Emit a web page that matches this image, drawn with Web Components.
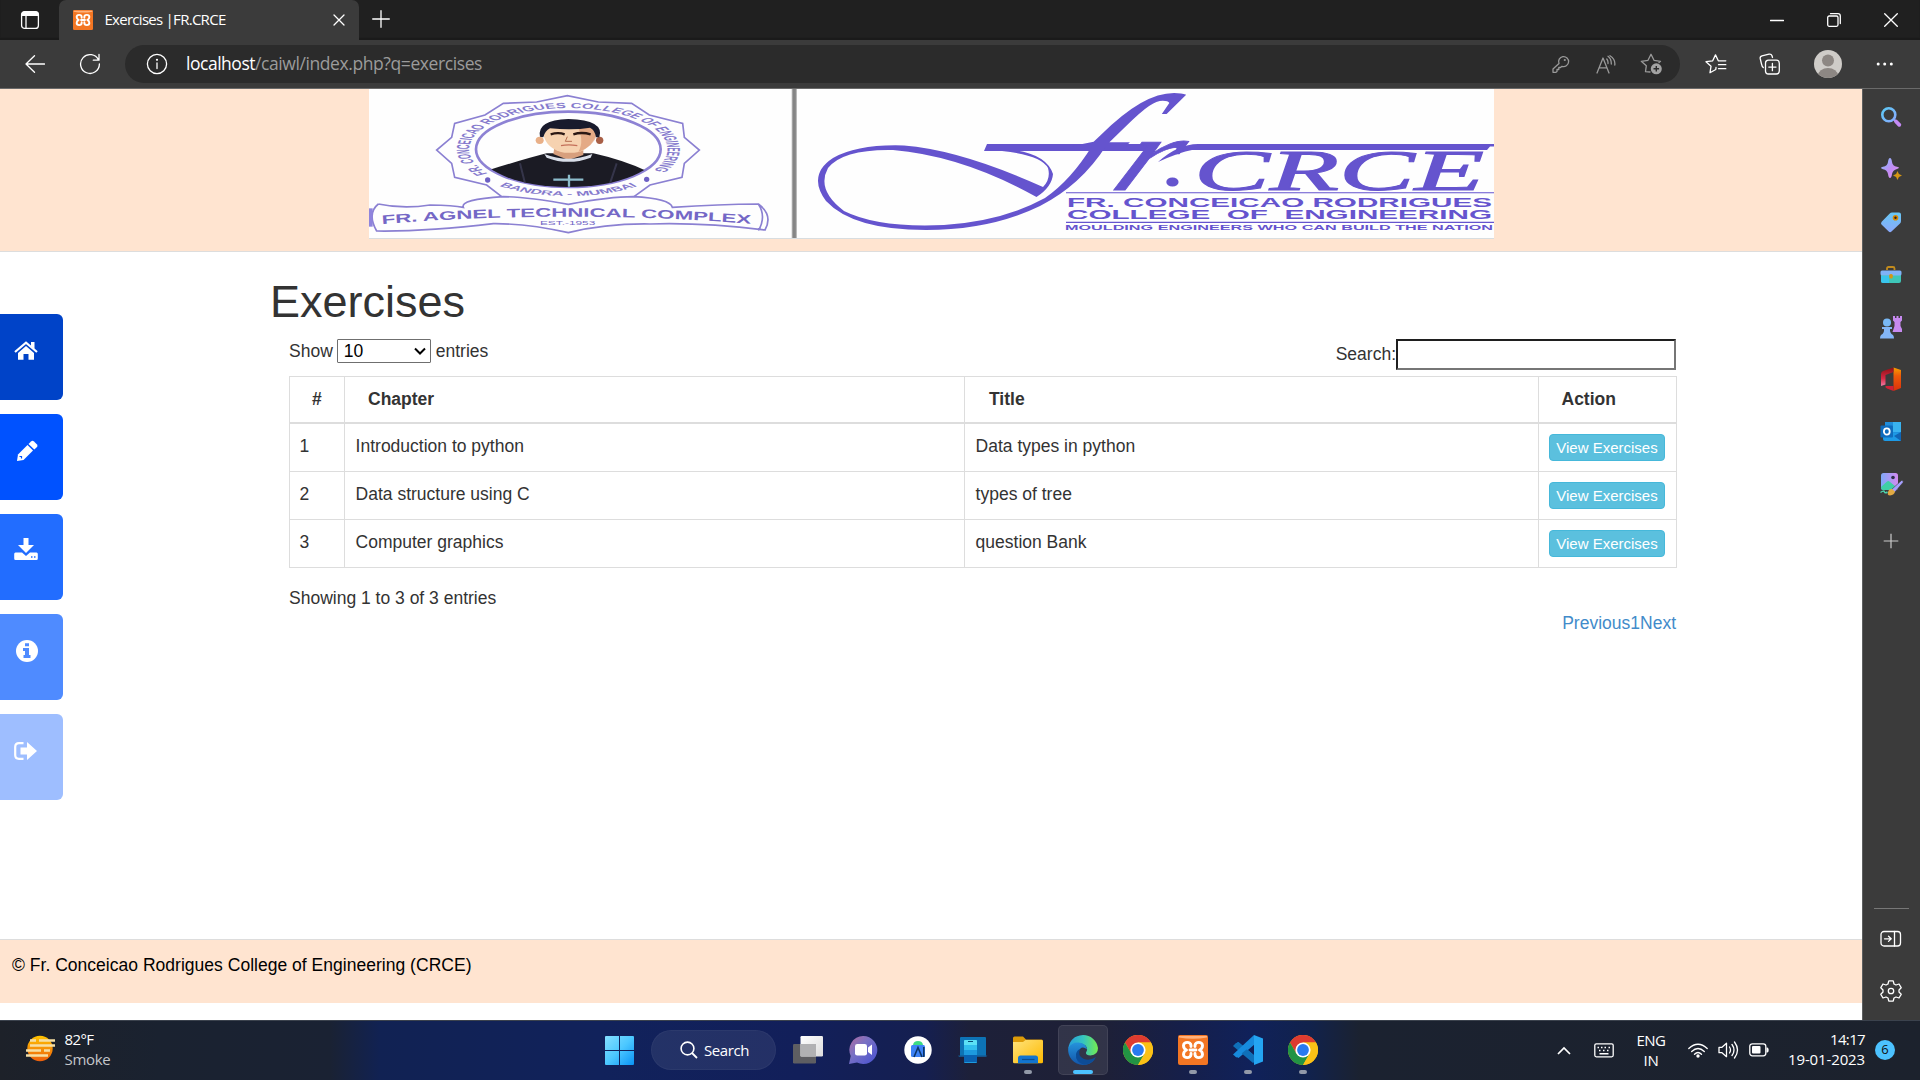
<!DOCTYPE html>
<html lang="en">
<head>
<meta charset="utf-8">
<title>Exercises |FR.CRCE</title>
<style>
html,body{margin:0;height:1080px;overflow:hidden;background:#fff}
body{font-family:"Liberation Sans",Arial,sans-serif}
</style>
</head>
<body>
<desktop-screen></desktop-screen>
<script>
const def=(name,html,after)=>customElements.define(name,class extends HTMLElement{
  constructor(){super();this.attachShadow({mode:'open'})}
  connectedCallback(){
    const t=document.createElement('template');
    t.innerHTML=typeof html==='function'?html(this):html;
    this.shadowRoot.replaceChildren(t.content.cloneNode(true));
    if(after)after(this);
  }
});

const chrome=`<g transform="translate(15 15)"><circle r="15" fill="#fbc116"/><path d="M-13 -7.5A15 15 0 0 1 13 -7.5L0 -7.5L-6.5 3.75Z" fill="#de3b30"/><path d="M-13 -7.5A15 15 0 0 0 0 15L6.5 3.75L-6.5 3.75Z" fill="#229344"/><path d="M0 -7.5H13A15 15 0 0 1 0 15L6.5 3.75Z" fill="#fbc116"/><circle r="7.6" fill="#fff"/><circle r="5.9" fill="#2a7af0"/></g>`;
const xampp=`<rect width="30" height="30" rx="2" fill="#f37623"/><path d="M1 1H29V2.5Q15 5 1 2.5Z" fill="#ffb27c"/><path d="M13 11.500V10.500C13 6.300 5.500 6.300 5.500 10.500C5.500 12.500 6.500 14.200 8.500 15C6.500 15.800 5.500 17.500 5.500 19.500C5.500 23.700 13 23.700 13 19.500V18.500M17 11.500V10.500C17 6.300 24.500 6.300 24.500 10.500C24.500 12.500 23.500 14.200 21.500 15C23.500 15.800 24.500 17.500 24.500 19.500C24.500 23.700 17 23.700 17 19.500V18.500M12 15H18" fill="none" stroke="#fff" stroke-width="2.900" stroke-linejoin="round" stroke-linecap="round"/>`;
const W='fill="none" stroke="#fff" stroke-width="1.3" stroke-linecap="round" stroke-linejoin="round"';
const G='fill="none" stroke="#9a9a9a" stroke-width="1.3" stroke-linecap="round" stroke-linejoin="round"';
const ICONS={
 workspace:[20,20,`<rect x="1.600" y="1.600" width="16.800" height="16.800" rx="3" ${W}/><path d="M1.500 6V4Q1.500 1.500 4 1.500H16Q18.500 1.500 18.500 4V6Z" fill="#fff"/><path d="M6 5V18" ${W}/>`],
 favicon:[30,30,xampp],
 xampp:[30,30,xampp],
 chrome:[30,30,chrome],
 x:[12,12,`<path d="M1 1L11 11M11 1L1 11" ${W}/>`],
 xbig:[14,14,`<path d="M.7 .7L13.300 13.300M13.300 .7L.7 13.300" ${W}/>`],
 plus:[18,18,`<path d="M9 .7V17.300M.7 9H17.300" ${W}/>`],
 plus2:[16,16,`<path d="M8 .7V15.300M.7 8H15.300" fill="none" stroke="#ccc" stroke-width="1.200"/>`],
 min:[14,14,`<path d="M.5 7.500H13.500" ${W}/>`],
 max:[14,14,`<rect x=".7" y="3" width="10.300" height="10.300" rx="1.500" ${W}/><path d="M3.500 .7H11Q13.300 .7 13.300 3V10.500" ${W}/>`],
 back:[20,18,`<path d="M19.500 9H1M9.500 .7L1 9L9.500 17.300" ${W}/>`],
 reload:[22,22,`<path d="M19.500 7A9.400 9.400 0 1 0 20.400 11M20 1.500V7.200H14.300" ${W}/>`],
 info:[22,22,`<circle cx="11" cy="11" r="9.600" ${W}/><path d="M11 10V15.500" ${W} /><circle cx="11" cy="6.800" r="1.100" fill="#fff"/>`],
 key:[18,18,`<path d="M7 8.500A5 5 0 1 1 10 11.300L8.500 12.500H6.800V14.500H5V16.500L4 17.300H1V14Z" ${G}/><circle cx="12.800" cy="5" r="1.100" fill="#9a9a9a"/>`],
 read:[20,19,`<path d="M1 18L7 3L13 18M3 12.800H11M12 1.300Q15.500 4 15.300 9M14 .7Q19.500 4 18.800 10M10.800 4Q12.300 6 12 8.500" ${G}/>`],
 star:[23,22,`<path d="M10 19L5.500 18.700L6.300 12.800L1.300 8.300L8 7.300L11 1.300L14 7.300L20.500 8.300L19 9.500" ${G}/><circle cx="16.300" cy="15.800" r="5.500" fill="#a3a3a3"/><path d="M16.300 13V18.600M13.500 15.800H19.100" stroke="#2b2b2b" stroke-width="1.400"/>`],
 favs:[22,20,`<path d="M11 13.500L10.800 15.500L5 18.700L6 12.300L1 7.700L7.700 6.800L10.500 .9L13.300 6.800H20.800M13.500 10.700H20.800M13.500 14.700H20.800" ${W}/>`],
 coll:[22,22,`<rect x="6.500" y="7.200" width="13.800" height="13.800" rx="3" ${W}/><path d="M13.400 10.500V17.700M9.800 14.100H17M4.300 14.500Q3 13.500 2.500 11L1.200 5.500Q.8 3.500 3 2.800L10 1.200Q12.300 .8 13 2.800L13.500 4.500" ${W}/>`],
 avatar:[28,28,`<defs><clipPath id="a"><circle cx="14" cy="14" r="14"/></clipPath></defs><g clip-path="url(#a)"><rect width="28" height="28" fill="#cfccc8"/><circle cx="14" cy="10.500" r="6" fill="#8d8783"/><ellipse cx="14" cy="25.500" rx="10" ry="7.500" fill="#8d8783"/></g>`],
 dots:[18,4,`<circle cx="2.200" cy="2" r="1.500" fill="#fff"/><circle cx="8.700" cy="2" r="1.500" fill="#fff"/><circle cx="15.300" cy="2" r="1.500" fill="#fff"/>`],
 ssearch:[22,22,`<defs><linearGradient id="g" x2="1" y2="1"><stop stop-color="#5bc9f5"/><stop offset="1" stop-color="#8aaaff"/></linearGradient></defs><circle cx="8.800" cy="8.800" r="6.500" fill="none" stroke="url(#g)" stroke-width="2.600"/><path d="M14 13.500L16 15.500" stroke="#8aaaff" stroke-width="2"/><path d="M16 15.500L19.300 18.800" stroke="#c58af5" stroke-width="3.800" stroke-linecap="round"/>`],
 spark:[22,22,`<defs><linearGradient id="g" x2="1" y2="1"><stop stop-color="#7ec6ff"/><stop offset=".55" stop-color="#c28bf3"/><stop offset="1" stop-color="#e59af0"/></linearGradient></defs><path d="M10 0Q11.500 0 12 4Q12.500 8 17 8.800Q21 9.500 17 11Q12.800 12 12 16Q11.500 20 10 20Q8.500 20 8 16Q7.200 12 3 11.200Q-1 10 3 8.800Q7.500 8 8 4Q8.500 0 10 0Z" fill="url(#g)"/><path d="M17.500 13L18.900 16.100L22 17.500L18.900 18.900L17.500 22L16.100 18.900L13 17.500L16.100 16.100Z" fill="#d59613"/>`],
 tag:[22,22,`<defs><linearGradient id="g" x2="0" y2="1"><stop stop-color="#67c7f3"/><stop offset="1" stop-color="#8ba9fb"/></linearGradient></defs><path d="M12 1.500H19Q21 1.500 21 3.500V10Q21 11.500 20 12.500L11.500 20.500Q10 21.800 8.700 20.500L1.500 13.500Q.4 12.200 1.700 10.800L9.500 2.700Q10.700 1.500 12 1.500Z" fill="url(#g)"/><circle cx="15.500" cy="6.700" r="2.800" fill="#d88a00"/><circle cx="15.500" cy="6.700" r="1.200" fill="#2a2222"/>`],
 box:[22,22,`<path d="M7 6V4.500Q7 3 8.500 3H13Q14.500 3 14.500 4.500V6" fill="none" stroke="#c28b1d" stroke-width="1.800"/><path d="M1 9H21V17Q21 19 19 19H3Q1 19 1 17Z" fill="#3ec6b8"/><path d="M1 12H9V19H3Q1 19 1 17Z" fill="#39c5ec"/><rect x=".5" y="6.500" width="21" height="5" rx="1.500" fill="#7fb2f7"/><rect x="9.200" y="10" width="3.600" height="4.500" rx="1.500" fill="#d59613"/>`],
 chess:[24,24,`<path d="M14 1H16V3H17.500V1H19.500V3H21V1H23V5.500L21.500 7V11L23 14V17H13.500L15.500 11V7L14 5.500Z" fill="#c78af0"/><circle cx="8" cy="7.500" r="4" fill="#79b9f7"/><path d="M3 12H13V14H11Q10.500 18 14 20Q15 21 15 23.500H1Q1 21 2 20Q5.500 18 5 14H3Z" fill="#83b6f8"/>`],
 office:[22,25,`<defs><linearGradient id="g" x2="0" y2="1"><stop stop-color="#f5a100"/><stop offset=".35" stop-color="#ee5b09"/><stop offset="1" stop-color="#d9300b"/></linearGradient><linearGradient id="h" x2="0" y2="1"><stop stop-color="#8f1014"/><stop offset=".6" stop-color="#d72a45"/><stop offset="1" stop-color="#f07ba5"/></linearGradient></defs><path d="M13.500 .5L21 3V21L13.500 24Z" fill="url(#g)"/><path d="M13.500 .5V5L5.500 8V17.500L1 19V7Q1 5 3 4Z" fill="url(#h)"/><path d="M5.500 19H13.500V24L7 21.500Q5 20.500 5.500 19Z" fill="#cf2136"/>`],
 outlook:[22,22,`<rect x="5" y="1" width="16" height="15" fill="#1f8ddb"/><path d="M13 1H21V11H13Z" fill="#39b3f0"/><path d="M3 11L21 12V20H5Q3 20 3 18Z" fill="#1d9ae6"/><path d="M14 15L21 11V20Z" fill="#1065b5"/><rect x=".5" y="4.500" width="12.500" height="12" rx="1" fill="#0f6cbd"/><ellipse cx="6.800" cy="10.500" rx="2.900" ry="3.200" fill="none" stroke="#fff" stroke-width="1.800"/>`],
 photo:[25,25,`<defs><linearGradient id="g" x2="1" y2="0"><stop stop-color="#7ea8f8"/><stop offset="1" stop-color="#d48af0"/></linearGradient></defs><rect x="2" y="1" width="17" height="17" rx="2.500" fill="url(#g)"/><path d="M2 15L8 9.500Q9.500 8.500 11 10L16 14V18H4Q2 18 2 15Z" fill="#3fcfa5"/><circle cx="14" cy="5.500" r="1.800" fill="#2e2f4a"/><path d="M12 18L22.500 8.500Q25 8 24 10.500L15.500 20.500Z" fill="#a7a0ff" stroke="#3b3b3b" stroke-width=".6"/><path d="M9 20Q10 16.500 13 17L16 19.500Q15.500 23 11 23.500Q8 23.500 9 20Z" fill="#e2aa43"/><path d="M1.500 20.500Q5 18 5.500 20Q6 21.500 8.500 20" fill="none" stroke="#4ed5ae" stroke-width="1.500"/>`],
 panel:[22,18,`<rect x="1" y="1.500" width="19.500" height="14.500" rx="3" ${W}/><path d="M14.500 1.500V16M4.500 8.800H11M8.500 6.200L11.200 8.800L8.500 11.400" ${W}/>`],
 gear:[24,24,`<path d="M9.800 1.800H14.200L15 5L17 6L20 5L22.200 8.700L20 11V13L22.200 15.300L20 19L17 18L15 19L14.200 22.200H9.800L9 19L7 18L4 19L1.800 15.300L4 13V11L1.800 8.700L4 5L7 6L9 5Z" ${W}/><circle cx="12" cy="12" r="2.700" ${W}/>`],
 home:[24,20,`<path d="M12 5L20 12V18.800H14.500V13H9.500V18.800H4V12Z" fill="#fff"/><path d="M1 11L12 1.700L23 11" fill="none" stroke="#fff" stroke-width="2.200"/><path d="M17 1H20.500V8L17 5Z" fill="#fff"/>`],
 pencil:[24,24,`<path d="M3 15.500L12.500 6L18 11.500L8.500 21L2 22Z" fill="#fff"/><path d="M13.500 5L16 2.500Q17.500 1 19 2.500L22 5.500Q23 7 22 8L19.300 10.500Z" fill="#fff"/><path d="M4.500 17.500H6.500V19.500" fill="none" stroke="#0052ff" stroke-width="1.200"/>`],
 download:[24,22,`<path d="M9.500 0H14.500V7H20L12 15L4 7H9.500Z" fill="#fff"/><path d="M1.500 14.500H8L12 18L16 14.500H22.500Q23.800 14.500 23.800 16V20.500Q23.800 22 22.500 22H1.500Q.2 22 .2 20.500V16Q.2 14.500 1.500 14.500Z" fill="#fff"/><path d="M17 19H18.500M20 19H21.500" stroke="#226dff" stroke-width="1.300"/>`],
 about:[22,22,`<circle cx="11" cy="11" r="11" fill="#fff"/><path d="M9 3.300H13V6.300H9ZM7 8H13V15H14.500V18H7.500V15H9V11H7Z" fill="#4f8bff"/>`],
 out:[23,18,`<path d="M9.500 1.200H5Q1.200 1.200 1.200 5V13Q1.200 16.800 5 16.800H9.500" fill="none" stroke="#fff" stroke-width="2.200"/><path d="M6.500 5.500H13V0L23 9L13 18V12.500H6.500Z" fill="#fff"/>`],
 weather:[31,27,`<defs><linearGradient id="g" x2="0" y2="1"><stop stop-color="#ffc400"/><stop offset="1" stop-color="#ee5f0c"/></linearGradient></defs><circle cx="15" cy="13.500" r="12.700" fill="url(#g)"/><path d="M5 5.500H11M14 5.500H30M5 10.500H30M1 15.500H16M19 15.500H25M1 20.500H23" stroke="#f6dfa5" stroke-width="2.300"/>`],
 win:[29,29,`<defs><linearGradient id="g" x2="1" y2="1"><stop stop-color="#85dfff"/><stop offset=".5" stop-color="#4cc8ff"/><stop offset="1" stop-color="#0a93f5"/></linearGradient></defs><path d="M0 1Q0 0 1 0H14V14H0ZM15 0H28Q29 0 29 1V14H15ZM0 15H14V29H1Q0 29 0 28ZM15 15H29V28Q29 29 28 29H15Z" fill="url(#g)"/>`],
 search:[18,18,`<circle cx="7.500" cy="7.500" r="6.400" fill="none" stroke="#fff" stroke-width="1.600"/><path d="M12 12L17 17" stroke="#fff" stroke-width="1.800"/>`],
 task:[30,28,`<defs><linearGradient id="g" x2="1" y2="1"><stop stop-color="#fff"/><stop offset="1" stop-color="#dcdcdc"/></linearGradient></defs><rect y="8" width="23" height="19.500" rx="1.200" fill="#5e5e62"/><rect x="7.500" y="0" width="22.500" height="20.500" rx="1.200" fill="url(#g)"/><rect x="7.500" y="8" width="15.500" height="12.500" fill="#b1b1b3"/>`],
 chat:[30,30,`<defs><linearGradient id="g" x1="0" y1="0" x2="1" y2="1"><stop stop-color="#b36b9d"/><stop offset=".4" stop-color="#7971c4"/><stop offset="1" stop-color="#4650d2"/></linearGradient></defs><path d="M15 1A14 14 0 1 1 9 27.500L1 29L2.700 21A14 14 0 0 1 15 1Z" fill="url(#g)"/><rect x="7" y="9" width="12" height="11.500" rx="2.300" fill="#fff"/><path d="M20 12.500L24 9.500V20L20 17Z" fill="#fff"/>`],
 studio:[28,28,`<circle cx="14" cy="14" r="13.700" fill="#fff"/><rect x="7" y="9" width="14" height="12" rx="1.500" fill="#3d83f6"/><path d="M9 9Q9.500 5 14 5Q18.500 5 19 9Z" fill="#3ddb84"/><path d="M10 21L14 11.500L18 21M19.800 11V21" fill="none" stroke="#0b3568" stroke-width="1.600"/>`],
 phone:[32,28,`<rect x="3" y="1" width="26" height="20" rx="1" fill="#0d73b5"/><path d="M1 19.500H30.500L29 21H2Z" fill="#15538a"/><rect x="7" y="4" width="13" height="23" rx="1" fill="#1d9ade"/><path d="M7 5Q7 4 8 4H19Q20 4 20 5V9H7Z" fill="#5be1f5"/><path d="M7 9H20V14H7Z" fill="#31bfee"/><path d="M7 19H20V26H7Z" fill="#0961b1"/><path d="M11 5.500H16" stroke="#074d78"/>`],
 folder:[30,28,`<defs><linearGradient id="g" x2="1" y2="1"><stop stop-color="#ffe37b"/><stop offset="1" stop-color="#fdb900"/></linearGradient></defs><path d="M0 2Q0 .5 1.500 .5H10L13 3.500H28.500Q30 3.500 30 5V12H0Z" fill="#dd9b08"/><path d="M0 6H10L12.500 4H28.500Q30 4 30 5.500V26Q30 27.300 28.500 27.300H1.500Q0 27.300 0 26Z" fill="url(#g)"/><path d="M5 27.300V22Q5 19.500 7.500 19.500H22.500Q25 19.500 25 22V27.300Z" fill="#1275cf"/><path d="M9 23.500H21.500" stroke="#0a4e91" stroke-width="1.200"/>`],
 edge:[30,30,`<defs><linearGradient id="g" x1="0" x2="1"><stop stop-color="#279edd"/><stop offset=".5" stop-color="#35c4bf"/><stop offset="1" stop-color="#74ec4f"/></linearGradient><linearGradient id="h" x2="0" y2="1"><stop stop-color="#2593dc"/><stop offset="1" stop-color="#1254a8"/></linearGradient></defs><path d="M15 0A15 15 0 0 1 30 13Q30 20 22.500 20.500Q17.500 20.500 18 17.500Q20.500 14 17.500 10.500Q9 5 .3 13.500Q2 1 15 0Z" fill="url(#g)"/><path d="M.3 13Q4 7 10.500 7.500Q18 8 19 14.500Q15 11 12 14Q7 20 14 26Q20 30 26.500 24.500Q22 30 15 30A15 15 0 0 1 .3 13Z" fill="url(#h)"/><path d="M12 14Q9 21 16 24Q22 26 28 22Q25 29 16 29.800Q7 27 8 19Q9 15 12 14Z" fill="#0d4c96"/>`],
 vscode:[30,30,`<path d="M2 9L5.500 7L22 21V29Z" fill="#1177c4"/><path d="M2 21L5.500 23L22 9V1Z" fill="#1b8bdb"/><path d="M2 9L0 11L20 28L22 21L5 7Z" fill="#0f70b9"/><path d="M21 0L30 3.500V26.500L21 30Z" fill="#24a5f2"/><path d="M0 19.500L21 0V8.500L3.500 22.500Z" fill="#178bdd"/>`],
 chev:[14,9,`<path d="M1 8L7 2L13 8" fill="none" stroke="#fff" stroke-width="1.700"/>`],
 down:[12,8,`<path d="M1 1.500L6 6.500L11 1.500" fill="none" stroke="#000" stroke-width="2"/>`],
 kbd:[20,15,`<rect x=".8" y=".8" width="18.400" height="13" rx="1.500" ${W}/><path d="M3.500 4.500H5M7 4.500H8.500M10.500 4.500H12M14.500 4.500H16M5 7.500H6.500M9 7.500H10.500M13 7.500H14.500M5.500 10.700H14.500" stroke="#fff" stroke-width="1.400"/>`],
 wifi:[20,15,`<path d="M.8 5.500Q10 -3 19.200 5.500M3.700 8.500Q10 2.500 16.300 8.500M6.500 11.300Q10 7.800 13.500 11.300" ${W}/><circle cx="10" cy="13" r="1.700" fill="#fff"/>`],
 vol:[21,18,`<path d="M1 6.300H4L8.500 2.300V15.700L4 11.700H1ZM11.500 6Q13.500 9 11.500 12M14 3.500Q18 9 14 14.500M16.500 1Q22.500 9 16.500 17" ${W}/>`],
 bat:[20,14,`<rect x=".8" y=".8" width="16" height="12" rx="2.500" ${W}/><rect x="3" y="3" width="8.500" height="7.600" rx="1" fill="#fff"/><path d="M17.500 4.500H18.500Q19.700 5 19.700 7Q19.700 9 18.500 9.500H17.500Z" fill="#fff"/>`]
};
def('ui-icon',h=>{const [w,hh,s]=ICONS[h.getAttribute('name')];const W2=h.getAttribute('w')||w,H2=h.getAttribute('h')||hh;
 return `<style>:host{display:block;flex:none;width:${W2}px;height:${H2}px}svg{display:block}</style><svg width="${W2}" height="${H2}" viewBox="0 0 ${w} ${hh}">${s}</svg>`});

/* Single line label that spreads its letters to an exact width */
def('fit-label',`<style>:host{display:block;flex:none;white-space:nowrap}span{display:inline-block;white-space:pre}</style><span><slot></slot></span>`,h=>{
 const s=h.shadowRoot.querySelector('span'),w=+h.getAttribute('w');
 s.style.letterSpacing=((w-s.getBoundingClientRect().width)/h.textContent.length)+'px';
 h.style.width=w+'px';
});

def('tab-strip',`<style>
:host{display:flex;height:40px;background:#202020;align-items:stretch;box-shadow:inset 0 -2px 1px #1a1a1a;font:15px/20px "Open Sans","Noto Sans",sans-serif;color:#fff}
.ws{width:59px;display:flex;align-items:center;padding-left:20px;box-sizing:border-box}
.tab{width:300px;box-sizing:border-box;background:#3b3b3b;border-radius:7px 7px 0 0;display:flex;align-items:center;padding:0 14px}
fit-label{margin:0 0 2px 11.500px;flex:none}.tab .c{margin-left:auto}
.new{margin:10px 0 0 13px}.win{margin-left:auto;display:flex;align-items:center;gap:43px;padding-right:22px}
</style><div class="ws"><ui-icon name="workspace"></ui-icon></div>
<div class="tab"><ui-icon name="favicon" w="20" h="20"></ui-icon><fit-label w="121">Exercises |FR.CRCE</fit-label><ui-icon class="c" name="x"></ui-icon></div>
<ui-icon class="new" name="plus"></ui-icon>
<div class="win"><ui-icon name="min"></ui-icon><ui-icon name="max"></ui-icon><ui-icon name="xbig"></ui-icon></div>`);

def('address-bar',`<style>
:host{display:flex;box-sizing:border-box;height:49px;background:#3b3b3b;border-bottom:1px solid #6a6a6a;padding:5px 26px 5px 25px;align-items:center;color:#fff;font:17.5px/24px "Open Sans","Noto Sans",sans-serif}
.rl{margin-left:34px}.box{margin-left:24px;width:1555px;height:38px;border-radius:19px;background:#2b2b2b;display:flex;align-items:center;box-sizing:border-box;padding:0 17px 0 21px}
.u{margin-left:18px;display:flex;padding-bottom:2px}.g{color:#9b9b9b}.r{margin-left:auto;display:flex;gap:24px;align-items:center}
.f{margin-left:25px}.co{margin-left:32px}.av{margin-left:33px}.d{margin-left:auto}
</style><ui-icon name="back"></ui-icon><ui-icon class="rl" name="reload"></ui-icon>
<div class="box"><ui-icon name="info"></ui-icon><div class="u"><fit-label w="69">localhost</fit-label><fit-label class="g" w="227">/caiwl/index.php?q=exercises</fit-label></div>
<div class="r"><ui-icon name="key" style="margin-right:2px"></ui-icon><ui-icon name="read"></ui-icon><ui-icon name="star"></ui-icon></div></div>
<ui-icon class="f" name="favs"></ui-icon><ui-icon class="co" name="coll"></ui-icon><ui-icon class="av" name="avatar"></ui-icon><ui-icon class="d" name="dots"></ui-icon>`);

def('edge-rail',`<style>
:host{display:flex;flex-direction:column;width:58px;height:931px;box-sizing:border-box;background:#3b3b3b;border-left:1px solid #5d5f60;align-items:center;padding:1.500px 1px 2.500px 0}
div{height:52.6px;display:flex;align-items:center;justify-content:center}.p{height:59px}
hr{width:35px;height:1px;border:0;background:#777;margin:auto 0 3px}
</style>${['ssearch','spark','tag','box','chess','office','outlook','photo'].map(n=>`<div><ui-icon name="${n}"></ui-icon></div>`).join('')}<div class="p"><ui-icon name="plus2"></ui-icon></div><hr><div><ui-icon name="panel"></ui-icon></div><div><ui-icon name="gear"></ui-icon></div>`);

def('college-banner',`<style>
:host{display:block;box-sizing:border-box;height:163px;background:#ffe4d0;border-bottom:1px solid #ddd;padding-left:369px}
svg{display:block;background:#fefefe;border-bottom:1px solid #d8dde0}
text{font-family:"Liberation Sans",Arial,sans-serif}
</style><svg width="1125" height="149" viewBox="369 89 1125 149">
<defs><linearGradient id="bar"><stop stop-color="#d0d0d0"/><stop offset=".3" stop-color="#858585"/><stop offset=".7" stop-color="#858585"/><stop offset="1" stop-color="#d0d0d0"/></linearGradient><clipPath id="face"><ellipse cx="625" cy="208" rx="272" ry="113"/></clipPath><clipPath id="upper"><rect x="1000" y="89" width="300" height="58"/></clipPath>
<path id="top" d="M-33.600 24A41.300 41.300 0 1 1 33.600 24"/><path id="bot" d="M-34 32A46.700 46.700 0 0 0 34 32"/><path id="rib" d="M66 432Q622 388 1178 432"/></defs>
<rect x="791.500" y="89" width="5.500" height="149" fill="url(#bar)"/>
<g transform="translate(360 80) scale(.33333)" fill="none" stroke="#8b80d2" stroke-width="5">
<path d="M425 350L380 315L284 292L275 250L230 210L275 172L284 130L375 105L430 70L530 66L622 47L715 66L815 70L868 105L968 130L973 172L1018 210L973 250L966 292L870 315L822 350"/>
<ellipse cx="625" cy="208" rx="277" ry="113" stroke-width="8" stroke="#8d82d4"/>
<g clip-path="url(#face)" stroke="none"><path d="M380 272Q500 235 560 220L700 220Q790 240 865 275L740 325H490Z" fill="#1b1b24"/><path d="M585 190H670V225L625 240L580 222Z" fill="#d79f7d"/><path d="M553 222Q625 250 697 222L692 233Q625 258 560 233Z" fill="#d9dee8"/><path d="M548 150Q552 200 600 215Q625 222 660 215Q700 200 712 150Q700 130 630 125Q560 130 548 150Z" fill="#f6d2b0"/><path d="M650 135Q708 130 711 165Q700 200 655 216Q675 180 650 135Z" fill="#d8906a" opacity=".6"/><ellipse cx="539" cy="181" rx="12" ry="11" fill="#e9b088"/><ellipse cx="719" cy="181" rx="11" ry="11" fill="#a85f46"/><path d="M540 170Q530 120 625 117Q735 120 718 172L708 172Q705 150 690 143Q640 152 570 145Q555 152 550 172Z" fill="#181a2c"/><path d="M572 163Q595 156 614 163M640 163Q665 155 692 163" stroke="#2b1814" stroke-width="7"/><path d="M622 170L616 184H636" stroke="#b56d50" stroke-width="3"/><path d="M603 197Q625 192 652 197" stroke="#c4705a" stroke-width="4"/><path d="M580 299H670M627 284V320" stroke="#8cbccb" stroke-width="7"/><path d="M480 250L495 310M770 250L750 310" stroke="#35354a" stroke-width="6"/></g>
<path d="M55 372Q130 388 210 375Q280 376 310 382Q300 358 430 350Q500 350 625 373Q750 350 820 350Q930 356 937 382Q1080 373 1195 372Q1240 405 1215 450Q1030 427 870 432Q740 430 625 458Q500 430 400 431Q200 455 50 453Q20 400 55 372M1195 372Q1220 410 1195 452"/>
<path d="M27 385H38V440H27Z" fill="#8f84dd" stroke="none"/>
<circle cx="383" cy="300" r="8" fill="#6d60c5" stroke="none"/><circle cx="860" cy="298" r="8" fill="#6d60c5" stroke="none"/>
<g fill="#7467c6" stroke="none"><text font-size="37" font-weight="bold"><textPath href="#rib" textLength="1108" lengthAdjust="spacingAndGlyphs">FR. AGNEL TECHNICAL COMPLEX</textPath></text><text x="540" y="435" font-size="16" textLength="166" lengthAdjust="spacingAndGlyphs">EST.-1953</text></g></g>
<g transform="translate(568.300 149.300) scale(2.400 1)" fill="#857acd" font-weight="bold"><text font-size="7.500"><textPath href="#top" textLength="177" lengthAdjust="spacingAndGlyphs">FR. CONCEICAO RODRIGUES COLLEGE OF ENGINEERING</textPath></text><text font-size="6.500"><textPath href="#bot" startOffset="7" textLength="62" lengthAdjust="spacingAndGlyphs">BANDRA - MUMBAI</textPath></text></g>
<g fill="#6554ce">
<path d="M984 151L987 144H1158L1152 151ZM1158 162Q1178 144 1198 144H1494V146.500H1490L1487 150H1192Q1180 152 1158 162Z"/>
<path d="M1092 146L1106 146Q1081 185 1040 206Q991 230 926 230Q853 230 826 201Q807 175 833 158Q858 144 904 145.500Q961 150 1043 187Q1051 179 1048 168Q1041 155 1002 151L1015 150Q1047 155 1053 174Q1052 187 1036.500 197Q963 156 893 150Q843 149 828 168Q816 190 844 211Q878 228 944 225Q1003 221 1045 198Q1071 180 1092 146Z"/>
<g clip-path="url(#upper)"><text transform="translate(990 234.500) skewX(-40)" style="font-family:'Liberation Serif'" font-style="italic" font-size="201">f</text></g>
<text transform="translate(1108 190) skewX(-28) scale(1.350 1)" style="font-family:'Liberation Serif'" font-style="italic" font-size="104" stroke="#6554ce" stroke-width=".8">r</text>
<text transform="translate(1163 186) scale(1.400 1)" style="font-family:'Liberation Serif'" font-weight="bold" font-size="54">.</text>
<text x="1194" y="189.500" style="font-family:'Liberation Serif'" font-style="italic" font-size="57" stroke="#6554ce" textLength="290" lengthAdjust="spacingAndGlyphs">CRCE</text>
<path d="M1066 192.200H1494V193.300H1066ZM1066 221.700H1494V223H1066Z"/>
<g font-weight="bold"><text x="1067" y="206.500" font-size="12" textLength="425" lengthAdjust="spacingAndGlyphs">FR. CONCEICAO RODRIGUES</text><text x="1067" y="219" font-size="12" textLength="425" lengthAdjust="spacingAndGlyphs" xml:space="preserve">COLLEGE  OF  ENGINEERING</text><text x="1065" y="230.200" font-size="7.500" textLength="428" lengthAdjust="spacingAndGlyphs">MOULDING ENGINEERS WHO CAN BUILD THE NATION</text></g></g>
</svg>`);

def('side-menu',`<style>
:host{display:flex;flex-direction:column;gap:14px;padding-top:62px;width:63px;flex:none}
a{display:block;height:86px;box-sizing:border-box;border-radius:0 6px 6px 0;padding:27px 0 0 14px}
</style><a style="background:#0043c8"><ui-icon name="home"></ui-icon></a><a style="background:#0052ff;padding:25px 0 0 15px"><ui-icon name="pencil"></ui-icon></a><a style="background:#226dff;padding-top:24px"><ui-icon name="download"></ui-icon></a><a style="background:#4f8bff;padding:26px 0 0 16px"><ui-icon name="about"></ui-icon></a><a style="background:#9ebeff;padding-top:28px"><ui-icon name="out"></ui-icon></a>`);

def('info-button',`<style>:host{display:block}button{display:block;box-sizing:border-box;width:116px;height:27px;margin:0;padding:0;border:1px solid #46b8da;border-radius:4px;background:#5bc0de;color:#fff;font:15px/25px "Liberation Sans",Arial,sans-serif;white-space:nowrap}</style><button><slot></slot></button>`);

const rows=[['1','Introduction to python','Data types in python'],['2','Data structure using C','types of tree'],['3','Computer graphics','question Bank']];
def('exercise-table',`<style>
:host{display:block;color:#333;margin-right:-1px}
.r{display:grid;grid-template-columns:55px 620px 574px 137px;box-sizing:border-box;height:48px;border-bottom:1px solid #ddd}
.r>*{border-left:1px solid #ddd;box-sizing:border-box;padding:10px 0 0 10.600px;line-height:25px}
.r>:first-child{padding-left:9.500px}.r>:last-child{padding-left:10px}
.h{border-top:1px solid #ddd;border-bottom:2px solid #ddd;font-weight:bold}.h>*{padding:10px 0 0 23px}.h>:first-child{padding-left:22px}.h>:nth-child(3){padding-left:24px}.h>:last-child{padding-left:22.500px}
.b{border-right:1px solid #ddd}
</style><div class="b"><div class="r h"><span>#</span><span>Chapter</span><span>Title</span><span>Action</span></div>
${rows.map(r=>`<div class="r"><span>${r[0]}</span><span>${r[1]}</span><span>${r[2]}</span><span><info-button>View Exercises</info-button></span></div>`).join('')}</div>`);

def('exercise-page',`<style>
:host{display:block;flex:none;width:1406px;margin-left:207px;color:#333;font:17.5px/25px "Liberation Sans",Arial,sans-serif}
h1{font-weight:400;font-size:45px;line-height:50px;margin:25px 0 0}
.in{margin-left:19px;width:1387px}
.bar{display:flex;justify-content:space-between;height:49px;box-sizing:border-box;padding-top:12px}
.s{display:flex;align-items:center;height:24px}
.sel{display:grid;align-items:center;margin:0 5px 0 4px}.sel>*{grid-area:1/1}.sel ui-icon{justify-self:end;margin-right:5px}
select{appearance:none;width:94px;height:24px;margin:0;padding:0 0 0 6px;border:1px solid #6f6f6f;border-radius:1px;background:#fff;color:#000;font:17.5px "Liberation Sans",Arial,sans-serif}
.q{display:flex;align-items:center;height:31px}
input{box-sizing:border-box;width:280px;height:31px;border:2px solid #767676;background:#fff;border-color:#1f1f1f #767676 #767676 #1f1f1f}
.st{margin-top:18px}.pg{text-align:right;color:#428bca}
</style><h1>Exercises</h1><div class="in"><div class="bar"><div class="s">Show<div class="sel"><select><option>10</option></select><ui-icon name="down"></ui-icon></div>entries</div><div class="q">Search:<input></div></div>
<exercise-table></exercise-table><div class="st">Showing 1 to 3 of 3 entries</div><div class="pg">Previous1Next</div></div>`);

def('web-page',`<style>
:host{display:flex;flex-direction:column;width:1862px;background:#fff}
main{display:flex;height:687px}
footer{box-sizing:border-box;height:64px;border-top:1px solid #ddd;background:#ffe4d0;color:#000;font:17.5px/25px "Liberation Sans",Arial,sans-serif;padding:13px 12px;letter-spacing:.02px}
</style><college-banner></college-banner><main><side-menu></side-menu><exercise-page></exercise-page></main><footer>© Fr. Conceicao Rodrigues College of Engineering (CRCE)</footer>`);

def('task-item',h=>`<style>:host{display:flex;flex:none;width:55px;height:50px;align-items:center;justify-content:center}
div{width:50px;height:50px;box-sizing:border-box;border-radius:5px;display:grid;grid-template-rows:1fr 5px;justify-items:center;align-items:center;padding-top:4px;${h.hasAttribute('active')?'background:rgba(255,255,255,.09);box-shadow:inset 0 0 0 1px rgba(255,255,255,.08)':''}}
i{width:${h.hasAttribute('active')?20:8}px;height:4px;border-radius:2px;background:${h.hasAttribute('active')?'#4cc2ff':h.hasAttribute('run')?'#9299a8':'transparent'};align-self:start}</style><div><ui-icon name="${h.getAttribute('icon')}"></ui-icon><i></i></div>`);

def('task-bar',`<style>
:host{display:flex;height:60px;box-sizing:border-box;border-top:1px solid #3b424d;padding-bottom:1px;align-items:center;color:#fff;font:15px/20px "Open Sans","Noto Sans",sans-serif;
background:linear-gradient(90deg,#1d2129 0,#1a2230 160px,#1a2233 330px,#112253 380px,#11225b 600px,#121f5a 800px,#151f50 925px,#1d2039 970px,#1e2036 1100px,#161f49 1180px,#10215a 1250px,#11224c 1310px,#1b2230 1360px,#1c222d 1920px)}
.we{display:flex;width:580px;padding-left:25px;align-items:center}.we ui-icon{margin-top:-4px}.we .t{margin:-3px 0 0 8.500px}.dim{color:#c4c6ca}
.pill{width:125px;height:40px;box-sizing:border-box;border-radius:20px;background:rgba(255,255,255,.08);box-shadow:inset 0 0 0 1px rgba(255,255,255,.04);display:flex;align-items:center;padding-left:29px;gap:6px;margin:0 4.500px 0 17px}
.pill fit-label{margin-top:-1px}
.apps{display:flex;align-items:center}
.tray{margin-left:auto;display:flex;align-items:center;padding-right:25px}
.l{width:30px;margin:-1px 22px 0 22.500px;text-align:center;display:flex;flex-direction:column;align-items:center}
.n{display:flex;gap:10px;align-items:center}.tm{margin:-3px 10px 0 19px;display:flex;flex-direction:column;align-items:flex-end}
.b{width:20px;height:20px;border-radius:50%;background:#4cc2ff;color:#111;font-size:13px;line-height:19px;text-align:center}
</style><div class="we"><ui-icon name="weather"></ui-icon><div class="t"><fit-label w="29">82°F</fit-label><fit-label class="dim" w="46">Smoke</fit-label></div></div>
<div class="apps"><ui-icon name="win"></ui-icon><div class="pill"><ui-icon name="search"></ui-icon><fit-label w="45">Search</fit-label></div>
<task-item icon="task"></task-item><task-item icon="chat"></task-item><task-item icon="studio"></task-item><task-item icon="phone"></task-item><task-item icon="folder" run></task-item><task-item icon="edge" active></task-item><task-item icon="chrome"></task-item><task-item icon="xampp" run></task-item><task-item icon="vscode" run></task-item><task-item icon="chrome" run></task-item></div>
<div class="tray"><ui-icon name="chev"></ui-icon><ui-icon name="kbd" style="margin-left:23px"></ui-icon><div class="l"><fit-label w="29">ENG</fit-label><fit-label w="15">IN</fit-label></div><div class="n"><ui-icon name="wifi"></ui-icon><ui-icon name="vol"></ui-icon><ui-icon name="bat"></ui-icon></div><div class="tm"><fit-label w="35">14:17</fit-label><fit-label w="77">19-01-2023</fit-label></div><div class="b">6</div></div>`);

def('desktop-screen',`<style>:host{display:flex;flex-direction:column;width:1920px;height:1080px}.m{display:flex;height:931px}</style><tab-strip></tab-strip><address-bar></address-bar><div class="m"><web-page></web-page><edge-rail></edge-rail></div><task-bar></task-bar>`);
</script>
</body>
</html>
